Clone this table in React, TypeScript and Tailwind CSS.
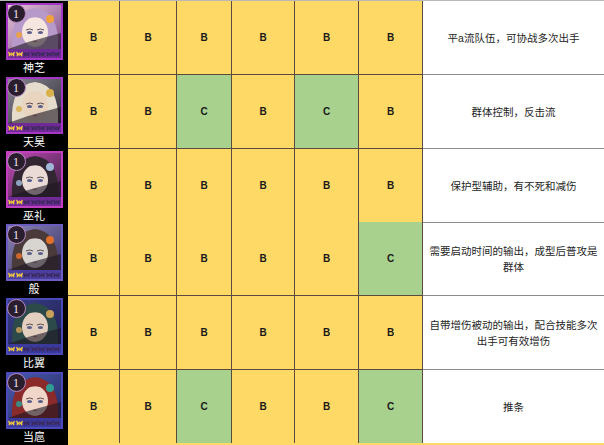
import React from "react";

type Grade = "B" | "C";

interface Hero {
  name: string;
  frame: string;
  band: string;
  bg: [string, string];
  hair: string;
  skin: string;
  accent: string;
  grades: Grade[];
  note: string[];
  h: string;
}

const heroes: Hero[] = [
  {
    name: "神芝",
    frame: "#a437c4",
    band: "#6f2a96",
    bg: ["#e9c7d8", "#7b4a8a"],
    hair: "#b79ac9",
    skin: "#f6e6e0",
    accent: "#f2a23a",
    grades: ["B", "B", "B", "B", "B", "B"],
    note: ["平a流队伍，可协战多次出手"],
    h: "h-[74px]",
  },
  {
    name: "天昊",
    frame: "#a437c4",
    band: "#6f2a96",
    bg: ["#8a8a94", "#2e2a36"],
    hair: "#e6dccb",
    skin: "#e9d4c0",
    accent: "#d9b24a",
    grades: ["B", "B", "C", "B", "C", "B"],
    note: ["群体控制，反击流"],
    h: "h-[74px]",
  },
  {
    name: "巫礼",
    frame: "#c23fc0",
    band: "#6f2a96",
    bg: ["#c34bb8", "#3a2040"],
    hair: "#332633",
    skin: "#eadbd6",
    accent: "#9fb8d8",
    grades: ["B", "B", "B", "B", "B", "B"],
    note: ["保护型辅助，有不死和减伤"],
    h: "h-[73px]",
  },
  {
    name: "般",
    frame: "#6b5cc0",
    band: "#4a3fa0",
    bg: ["#8a86b8", "#3c3266"],
    hair: "#4a3a3a",
    skin: "#d8d4d0",
    accent: "#e0702a",
    grades: ["B", "B", "B", "B", "B", "C"],
    note: ["需要启动时间的输出，成型后普攻是", "群体"],
    h: "h-[74px]",
  },
  {
    name: "比翼",
    frame: "#4a4ab8",
    band: "#3b3a9c",
    bg: ["#3a3f8a", "#1e2050"],
    hair: "#2d4a4a",
    skin: "#e3cfc0",
    accent: "#c9a05a",
    grades: ["B", "B", "B", "B", "B", "B"],
    note: ["自带增伤被动的输出，配合技能多次", "出手可有效增伤"],
    h: "h-[74px]",
  },
  {
    name: "当扈",
    frame: "#4a4ab8",
    band: "#3b3a9c",
    bg: ["#4a5ab0", "#252a60"],
    hair: "#8a2a2a",
    skin: "#f0d6c8",
    accent: "#2f9c94",
    grades: ["B", "B", "C", "B", "B", "C"],
    note: ["推条"],
    h: "h-[73px]",
  },
];

const gradeBg: Record<Grade, string> = {
  B: "bg-[#ffd966]",
  C: "bg-[#a9d18e]",
};

const Butterfly = ({ color }: { color: string }) => (
  <svg viewBox="0 0 10 8" className="block shrink-0 w-[7px] h-[6px]">
    <path d="M5 4 L0.5 0.3 Q-0.3 3 1.5 4 Q0 6.8 2 7.7 Z" fill={color} />
    <path d="M5 4 L9.5 0.3 Q10.3 3 8.5 4 Q10 6.8 8 7.7 Z" fill={color} />
    <rect x="4.5" y="1.5" width="1" height="5.5" fill={color} />
  </svg>
);

const Portrait = ({ hero, idx }: { hero: Hero; idx: number }) => {
  const gid = `g${idx}`;
  return (
    <div
      className="relative w-[57px] h-[57px] p-[2px]"
      style={{ backgroundColor: hero.frame }}
    >
      <svg viewBox="0 0 53 44" className="block w-[53px] h-[44px]">
        <defs>
          <linearGradient id={gid} x1="0" y1="0" x2="1" y2="1">
            <stop offset="0" stopColor={hero.bg[0]} />
            <stop offset="1" stopColor={hero.bg[1]} />
          </linearGradient>
        </defs>
        <rect width="53" height="44" fill={`url(#${gid})`} />
        <path d="M4 44 Q2 6 27 3 Q52 6 50 44 Z" fill={hero.hair} />
        <ellipse cx="27" cy="27" rx="13" ry="15" fill={hero.skin} />
        <path d="M12 22 Q18 6 44 16 Q36 11 27 11 Q17 12 12 22 Z" fill={hero.hair} />
        <path d="M18 25 Q22 23 25 25" stroke="#3a2a30" strokeWidth="0.8" fill="none" />
        <path d="M29 25 Q32 23 36 25" stroke="#3a2a30" strokeWidth="0.8" fill="none" />
        <ellipse cx="21.5" cy="27.5" rx="2.6" ry="1.6" fill="#5a5f8a" />
        <ellipse cx="32.5" cy="27.5" rx="2.6" ry="1.6" fill="#5a5f8a" />
        <path d="M25 36 Q27 37.5 29 36" stroke="#b0606a" strokeWidth="0.9" fill="none" />
        <circle cx="42" cy="14" r="4" fill={hero.accent} />
        <circle cx="11" cy="30" r="3" fill={hero.accent} opacity="0.85" />
        <path d="M0 44 L20 37 L53 28 L53 44 Z" fill="#1c1622" opacity="0.6" />
      </svg>
      <div
        className="flex items-center justify-center gap-[0.5px] h-[9px]"
        style={{ backgroundColor: hero.band }}
      >
        {[0, 1, 2, 3, 4, 5, 6].map((i) => (
          <Butterfly key={i} color={i < 2 ? "#f5cd3a" : "#3a2a5a"} />
        ))}
      </div>
      <div className="absolute left-[1px] top-[1px] w-[19px] h-[19px] rounded-full bg-[#2a1e2e] border border-[#b88ac0] flex items-center justify-center">
        <span className="text-[12px] leading-none text-[#f2eaf2] font-['Liberation_Serif',serif]">
          1
        </span>
      </div>
    </div>
  );
};

export default function App() {
  return (
    <div className="w-[604px] h-[445px] overflow-hidden bg-white font-['Liberation_Sans','Noto_Sans_CJK_SC',sans-serif]">
      <div className="border-t border-[#b8b8b8]" />
      {heroes.map((hero, idx) => (
        <div
          key={hero.name}
          className={`grid grid-cols-[68px_52px_57px_55px_63px_64px_64px_181px] ${hero.h}`}
        >
          <div className="bg-black flex flex-col items-center pt-[2px]">
            <Portrait hero={hero} idx={idx} />
            <div className="text-white text-[11px] leading-[14px] mt-[1px]">
              {hero.name}
            </div>
          </div>
          {hero.grades.map((g, i) => (
            <div
              key={i}
              className={`${gradeBg[g]} flex items-center justify-center border-r border-b border-[#5c4a40] text-[10px] font-bold text-[#1a1a1a]`}
            >
              {g}
            </div>
          ))}
          <div className="flex flex-col items-center justify-center border-b border-[#8c8c8c] text-[10.5px] leading-[16px] text-[#1e1e1e] text-center whitespace-nowrap">
            {hero.note.map((line) => (
              <div key={line}>{line}</div>
            ))}
          </div>
        </div>
      ))}
      <div className="grid grid-cols-[68px_536px] h-[4px]">
        <div className="bg-black" />
        <div className="bg-[#ffd966]" />
      </div>
    </div>
  );
}
